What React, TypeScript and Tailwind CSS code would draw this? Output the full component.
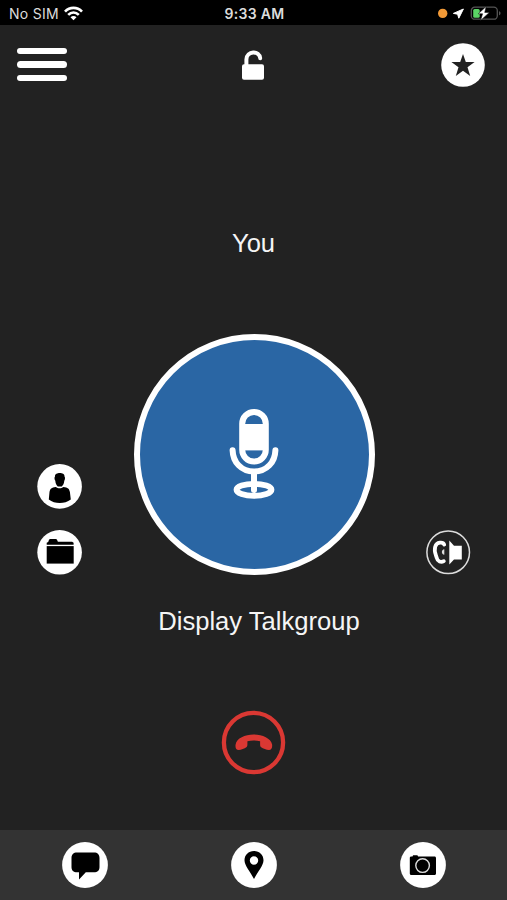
import type { ReactNode } from "react";

type IconButtonProps = {
	label: string;
	className?: string;
	children: ReactNode;
};

function IconButton({ label, className = "", children }: IconButtonProps) {
	return (
		<button aria-label={label} className={`block shrink-0 ${className}`}>
			{children}
		</button>
	);
}

function StatusBar() {
	return (
		<div className="grid grid-cols-3 h-[25px] items-center bg-black pl-[9px] pr-[6px] pt-[2px] text-[#dcdcdc] font-['Inter','Liberation_Sans',sans-serif]">
			<div className="flex items-center gap-[5px]">
				<span className="text-[14px] leading-none tracking-[0.3px]">No SIM</span>
				<svg width="19" height="15" viewBox="0 0 19 15" fill="none" stroke="white" strokeWidth="2.7">
					<path d="M1 5.6C5.8 .7 13.2 .7 18 5.6" />
					<path d="M4.2 8.9c3.1-3 7.5-3 10.6 0" />
					<path d="M6.5 11.2c1.8-1.6 4.2-1.6 6 0l-3 3z" fill="white" stroke="none" />
				</svg>
			</div>
			<span className="pr-[1px] text-center text-[14px] leading-none font-semibold tracking-[0.3px]">
				9:33 AM
			</span>
			<svg className="justify-self-end" width="64" height="16" viewBox="0 0 64 16">
				<circle cx="5.7" cy="7.4" r="4.7" fill="#f39a37" />
				<path d="M26.4 3 21.8 12.2l-1.2-4-4.2-.8z" fill="white" stroke="white" strokeWidth="1" strokeLinejoin="round" />
				<rect x="34.3" y="1.2" width="26" height="12" rx="3.5" fill="none" stroke="#555" strokeWidth="1.3" />
				<path d="M62 5.3c2 .4 2 3.6 0 4z" fill="#555" />
				<rect x="36.2" y="2.9" width="6.5" height="8.8" rx="1.5" fill="#5ad465" />
				<path d="m49.2.5-8 7.3h4.4l-2 6.6 8.8-8h-4.700z" fill="white" stroke="black" strokeWidth=".5" />
			</svg>
		</div>
	);
}

function Header() {
	return (
		<header className="flex h-[79px] items-center justify-between pl-[17px] pr-[22px]">
			<button aria-label="Menu" className="flex w-[50px] flex-col gap-[7px]">
				<span className="h-[6.5px] rounded-full bg-white" />
				<span className="h-[6.5px] rounded-full bg-white" />
				<span className="h-[6.5px] rounded-full bg-white" />
			</button>
			<IconButton label="Unlock" className="mr-[3px]">
				<svg width="34" height="32" viewBox="0 0 34 32">
					<path d="M10.4 16V10.5C10.4 1.5 23.8 1.2 24.2 9.2" fill="none" stroke="white" strokeWidth="4" strokeLinecap="round" />
					<rect x="6" y="15.3" width="22" height="15.5" rx="2" fill="white" />
				</svg>
			</IconButton>
			<IconButton label="Favourite">
				<svg width="44" height="44" viewBox="0 0 44 44">
					<circle cx="22" cy="22" r="21.8" fill="white" />
					<path d="m22 11 2.8 8.1h8.8l-7.1 5.2 2.7 8.6-7.2-5.2-7.2 5.2 2.7-8.6-7.1-5.2h8.8z" fill="#222" />
				</svg>
			</IconButton>
		</header>
	);
}

function MicIcon() {
	return (
		<svg width="50" height="92" viewBox="0 0 50 92" fill="none" stroke="white" strokeWidth="6" strokeLinecap="round">
			<rect x="13.2" y="4" width="23.6" height="49.5" rx="11.8" />
			<path d="M14 16h22v26.4H14z" fill="white" stroke="none" />
			<path d="M3.6 42.3C4 54 12 63.5 25 63.5s21-9.5 21.4-21.2" />
			<path d="M25 65v17" />
			<ellipse cx="25" cy="81.800" rx="17.500" ry="6" strokeWidth="5.800" />
		</svg>
	);
}

function TalkControls() {
	return (
		<section className="flex h-[241px] items-end justify-between pl-[37px] pr-[36px]">
			<div className="flex flex-col gap-[21px]">
				<IconButton label="Contacts">
					<svg width="45" height="45" viewBox="0 0 45 45">
						<circle cx="22.6" cy="22.4" r="22.3" fill="white" />
						<path d="M18 12.4c-.3-4.400 9.900-4.400 9.500 0 .8.8.6 3.300-.2 4.300-.2 3-1.500 4.800-2.500 5.700h-4c-1.200-1-2.300-2.800-2.500-5.700-.9-1-1.100-3.500-.3-4.300Z" />
						<path d="M18.8 23c2.200 1.800 5.400 1.800 7.600 0 4.500.4 5.900 1.800 6.500 5l.9 7.400c-6.200 4.700-16 4.700-22 0l.7-7.400c.6-3.200 2-4.600 6.300-5Z" />
					</svg>
				</IconButton>
				<IconButton label="Files">
					<svg width="45" height="45" viewBox="0 0 45 45">
						<circle cx="22.6" cy="22.3" r="22.3" fill="white" />
						<path d="M9.700 14.800v-2l1.500-.7.900-2.600 1.200-.5h5.600l1 .6 1 2.200h14.200l1.500 1v2z" />
						<path d="M9.700 16.100h27v17.500h-27z" />
					</svg>
				</IconButton>
			</div>
			<button
				aria-label="Push to talk"
				className="flex size-[241px] items-center justify-center rounded-full border-[6px] border-white bg-[#2a66a4]"
			>
				<MicIcon />
			</button>
			<IconButton label="Speaker mode">
				<svg width="45" height="45" viewBox="0 0 45 45">
					<circle cx="22.2" cy="22.3" r="21.3" fill="none" stroke="#ddd" strokeWidth="1.5" />
					<path
						d="M18.200 14.600c-1.200-3-7.500-3-9 2.200-1.500 5 .8 7.800 1.600 11.200.7 3.700 4.300 4.700 7 3.200"
						fill="none"
						stroke="white"
						strokeWidth="3.8"
						strokeLinecap="round"
					/>
					<path d="M18.300 19.300c-3.200.3-3.300 5.200 0 5.500z" fill="#ddd" />
					<path d="m23.3 10.500 4.700 5.200h7.800v13.800H28l-4.700 5z" fill="white" />
				</svg>
			</IconButton>
		</section>
	);
}

function BottomNav() {
	return (
		<nav className="grid h-[70.5px] grid-cols-3 items-center justify-items-center bg-[#333] pl-px">
			<IconButton label="Messages">
				<svg width="46" height="46" viewBox="0 0 46 46">
					<circle cx="23" cy="23" r="22.9" fill="white" />
					<path d="M15 10.5h17c3.500 0 5.500 2 5.500 5.500v9c0 3.500-2 5.300-5.500 5.300h-8.200L17 37.400v-7.100h-2c-3.500 0-5.500-1.800-5.500-5.300v-9c0-3.500 2-5.500 5.500-5.500Z" />
				</svg>
			</IconButton>
			<IconButton label="Location">
				<svg width="46" height="46" viewBox="0 0 46 46">
					<circle cx="23" cy="23" r="22.9" fill="white" />
					<path
						fillRule="evenodd"
						d="M23 9c-5.5 0-9.5 4-9.5 9.300C13.500 23.500 19 29.300 23 37c4-7.700 9.500-13.500 9.500-18.700C32.500 13 28.500 9 23 9Zm0 5.300a4.200 4.200 0 1 1 0 8.400 4.200 4.200 0 0 1 0-8.400Z"
					/>
				</svg>
			</IconButton>
			<IconButton label="Camera">
				<svg width="46" height="46" viewBox="0 0 46 46">
					<circle cx="23" cy="23" r="22.9" fill="white" />
					<path d="M11.2 14.600h1.300l.6-1.300h4.300l.7 1.300h16.400c.9 0 1.500.6 1.500 1.500v15.300c0 .9-.6 1.500-1.500 1.500H11.300c-.9 0-1.500-.6-1.500-1.500V16c0-.8.600-1.400 1.400-1.400Z" />
					<circle cx="22.6" cy="23.6" r="6.800" stroke="#ddd" strokeWidth="1.4" />
				</svg>
			</IconButton>
		</nav>
	);
}

export default function App() {
	return (
		<div className="flex h-[900px] w-full flex-col overflow-hidden bg-[#222] text-[#f5f5f5] font-['Liberation_Sans',Arial,sans-serif]">
			<StatusBar />
			<Header />
			<p className="mt-[123px] h-8 text-center text-[25.5px] leading-8">You</p>
			<div className="mt-[74.5px]">
				<TalkControls />
			</div>
			<p className="mt-[30.5px] h-8 pl-[11px] text-center text-[25.6px] leading-8">
				Display Talkgroup
			</p>
			<div className="mt-[73px] flex justify-center">
				<IconButton label="End call">
					<svg width="65" height="65" viewBox="0 0 65 65" fill="#da3833">
						<circle cx="32.5" cy="32.5" r="29.6" fill="none" stroke="#da3833" strokeWidth="4.3" />
						<path d="M14.6 34.500c1-6.300 9.400-10 18-10s17.300 3.700 18.500 10c.4 3-.6 5.600-3.200 5.600-2.400 0-6-1.600-7.700-2.800-.9-.7-1.100-1.600-1.100-3v-3c-4-1-8.800-1-12.700 0v3c0 1.400-.2 2.300-1.100 3-1.700 1.200-5.200 2.800-7.600 2.800-2.600 0-3.600-2.600-3.100-5.600Z" />
					</svg>
				</IconButton>
			</div>
			<div className="mt-auto">
				<BottomNav />
			</div>
		</div>
	);
}
